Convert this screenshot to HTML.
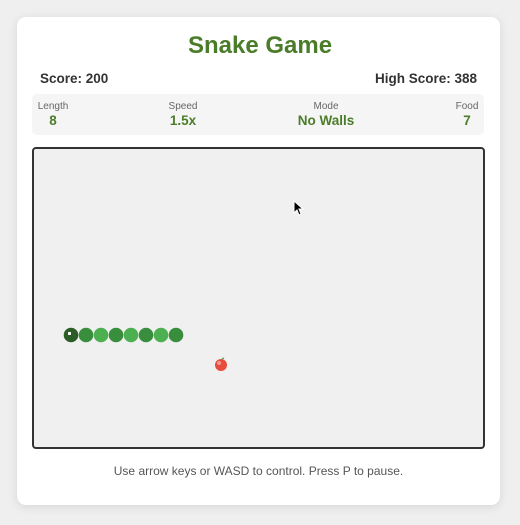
<!DOCTYPE html>
<html><head><style>
body{margin:0;width:520px;height:525px;background:#efefef;font-family:"Liberation Sans",Arial,sans-serif;position:relative;overflow:hidden}
.card{position:absolute;left:17px;top:17px;width:483px;height:488px;background:#fff;border-radius:9px;box-shadow:0 2px 10px rgba(0,0,0,.1)}
h1{position:absolute;left:0;right:0;top:31px;margin:0;text-align:center;font-size:24px;color:#4a7c2a;font-weight:bold;line-height:30px}
.sc{position:absolute;top:70px;font-size:13.5px;font-weight:bold;color:#333;line-height:18px}
.stats{position:absolute;left:32px;top:94px;width:452px;height:41px;background:#f5f5f5;border-radius:5px}
.st{position:absolute;top:101px;text-align:center;transform:translateX(-50%)}
.st .l{font-size:10px;color:#666;line-height:12px}
.st .v{font-size:13.5px;font-weight:bold;color:#4a7c2a;line-height:15px}
.cv{position:absolute;left:32px;top:147px;width:449px;height:298px;border:2px solid #333;border-radius:4px;background:#f0f0f0}
.foot{position:absolute;left:17px;width:483px;top:464px;text-align:center;font-size:12px;color:#555}
</style></head><body>
<div class="card"></div>
<h1>Snake Game</h1>
<div class="sc" style="left:40px">Score: 200</div>
<div class="sc" style="right:43px">High Score: 388</div>
<div class="stats"></div>
<div class="st" style="left:53px"><div class="l">Length</div><div class="v">8</div></div>
<div class="st" style="left:183px"><div class="l">Speed</div><div class="v">1.5x</div></div>
<div class="st" style="left:326px"><div class="l">Mode</div><div class="v">No Walls</div></div>
<div class="st" style="left:467px"><div class="l">Food</div><div class="v">7</div></div>
<div class="cv"></div>
<svg style="position:absolute;left:0;top:0" width="520" height="525">
<circle cx="71" cy="335" r="7.3" fill="#2b5e26"/>
<rect x="68" y="332" width="3" height="3" fill="#fff"/>
<circle cx="86" cy="335" r="7.3" fill="#388e3c"/>
<circle cx="101" cy="335" r="7.3" fill="#4caf50"/>
<circle cx="116" cy="335" r="7.3" fill="#388e3c"/>
<circle cx="131" cy="335" r="7.3" fill="#4caf50"/>
<circle cx="146" cy="335" r="7.3" fill="#388e3c"/>
<circle cx="161" cy="335" r="7.3" fill="#4caf50"/>
<circle cx="176" cy="335" r="7.3" fill="#388e3c"/>
<circle cx="221" cy="365" r="6" fill="#e74c3c"/>
<circle cx="219" cy="363" r="2" fill="#f49a8e"/>
<path d="M222 359l2-1" stroke="#4caf50" stroke-width="1.5"/>
<path d="M294 201v12l3-3 2 5 2-1-2-5h4z" fill="#000" stroke="#fff" stroke-width="1"/>
</svg>
<div class="foot">Use arrow keys or WASD to control. Press P to pause.</div>
</body></html>
